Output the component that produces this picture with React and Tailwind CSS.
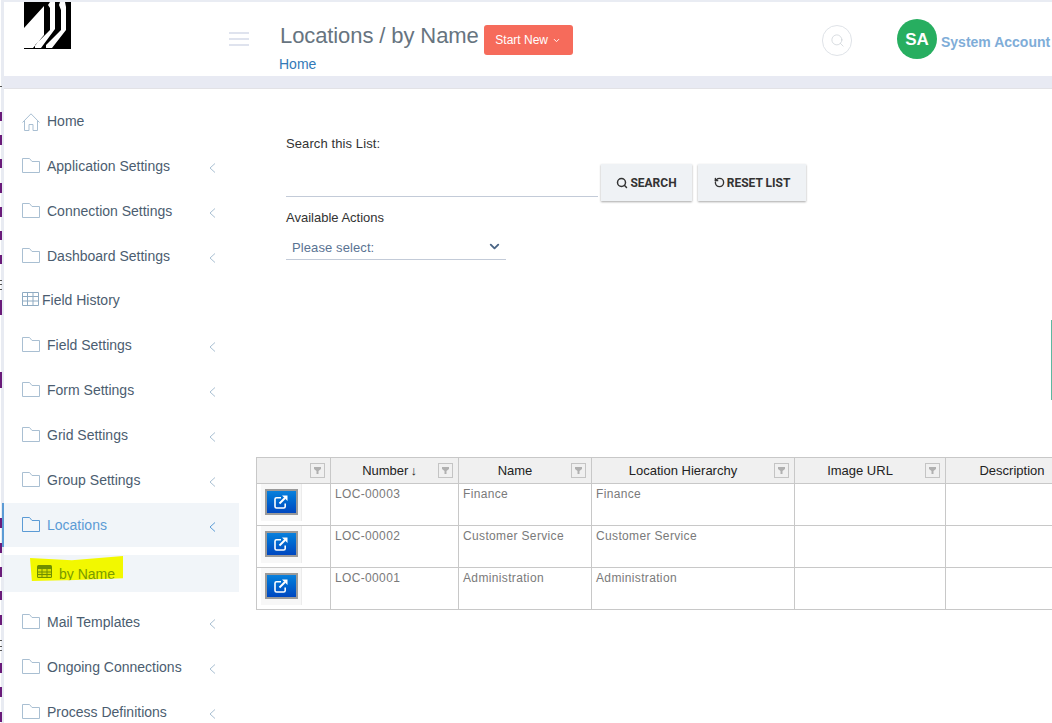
import { ChevronDown, RotateCcw, Search } from 'lucide-react';

const menuTop = [
  { label: 'Home', icon: 'home' },
  { label: 'Application Settings', icon: 'folder', arrow: true },
  { label: 'Connection Settings', icon: 'folder', arrow: true },
  { label: 'Dashboard Settings', icon: 'folder', arrow: true },
  { label: 'Field History', icon: 'grid' },
  { label: 'Field Settings', icon: 'folder', arrow: true },
  { label: 'Form Settings', icon: 'folder', arrow: true },
  { label: 'Grid Settings', icon: 'folder', arrow: true },
  { label: 'Group Settings', icon: 'folder', arrow: true },
];

const menuBottom = ['Mail Templates', 'Ongoing Connections', 'Process Definitions'];

const columns = [
  { label: '', width: 'w-[74px]', filter: true },
  { label: 'Number', width: 'w-[128px]', filter: true, sorted: true },
  { label: 'Name', width: 'w-[133px]', filter: true },
  { label: 'Location Hierarchy', width: 'w-[203px]', filter: true },
  { label: 'Image URL', width: 'w-[151px]', filter: true },
  { label: 'Description', width: 'w-[138px]' },
];

const rows = [
  { number: 'LOC-00003', name: 'Finance' },
  { number: 'LOC-00002', name: 'Customer Service' },
  { number: 'LOC-00001', name: 'Administration' },
];

// purple bits of whatever sits behind the window, [top, height]
const edgeMarks = [
  [112, 9], [135, 10], [159, 9], [183, 10], [207, 10], [231, 9], [255, 9], [300, 15], [372, 16],
  [518, 10], [543, 10], [567, 10], [591, 9], [615, 10], [663, 10], [687, 10], [712, 10],
];
const edgeDashes = [86, 280, 284, 289, 640, 646, 650];

function FolderIcon({ color = '#a9bfd2' }) {
  return (
    <svg width="18" height="15" viewBox="0 0 18 15" fill="none" stroke={color} className="shrink-0 -mt-[2px]">
      <path d="M.5 14.500V.5h7l2.500 3h7.500v11z" />
    </svg>
  );
}

function HomeIcon() {
  return (
    <svg width="18" height="18" viewBox="0 0 18 18" fill="none" stroke="#a9bfd2" className="shrink-0">
      <path d="M.5 9.500 9 .8l8.500 8.700M2.500 8v9.500h4.500v-6h4v6h4.500V8" />
    </svg>
  );
}

function GridIcon() {
  return (
    <svg width="17" height="14" viewBox="0 0 17 14" fill="none" stroke="#8fabc2" className="shrink-0 -mt-[5px]">
      <path d="M.5.500h16v13H.500zM.5 4.500h16M.5 9h16M5.500.5v13M11 .5v13" />
    </svg>
  );
}

function ArrowLeft({ color = '#a9bfd2' }) {
  return (
    <svg width="7" height="10" viewBox="0 0 7 10" fill="none" stroke={color} className="shrink-0 mt-[3px]">
      <path d="M6 .5 1 5l5 4.500" />
    </svg>
  );
}

function MenuItem({ label, icon, arrow }) {
  return (
    <div className={`${icon === 'grid' ? 'h-[44px]' : 'h-[45px]'} flex items-center pl-[18px] pr-[23px] text-[14px] text-[#4b5d70]`}>
      {icon === 'home' && <HomeIcon />}
      {icon === 'folder' && <FolderIcon />}
      {icon === 'grid' && <GridIcon />}
      <span className={icon === 'grid' ? 'ml-[3px] -mt-[2px] flex-1' : 'ml-[7px] flex-1'}>{label}</span>
      {arrow && <ArrowLeft />}
    </div>
  );
}

function FilterButton() {
  return (
    <span className="w-[15px] h-[15px] border border-[#c4c4c4] bg-[#f0f0f0] flex items-center justify-center shrink-0">
      <svg width="7" height="7" viewBox="0 0 7 7" fill="#b0b0b0">
        <path d="M0 0h7v2L4.500 4v3h-2V4L0 2z" />
      </svg>
    </span>
  );
}

function Logo() {
  return (
    <svg width="47" height="47" viewBox="0 0 47 47" className="block">
      <rect width="47" height="47" fill="#000" />
      <path
        d="M20 4 0 26v20h9l11-13zM26 0h5v27L17 46h-6v-3l15-15V6l-2-3zM36 0h5l1 5v23L28 46h-6v-3l15-15V8l-2-5z"
        fill="#fff"
      />
    </svg>
  );
}

function OpenIcon() {
  return (
    <svg width="14" height="14" viewBox="0 0 14 14" fill="none" stroke="#fff" strokeWidth="1.600">
      <path d="M7 2.800H2.500a1.500 1.500 0 0 0-1.500 1.500v7.200a1.500 1.500 0 0 0 1.500 1.500h7.200a1.500 1.500 0 0 0 1.500-1.500V8.500" />
      <path d="M5.500 8.500 11 3" strokeWidth="2" />
      <path d="M8 .5h5.500V6z" fill="#fff" stroke="none" />
    </svg>
  );
}

function TableIcon() {
  return (
    <svg width="15" height="13" viewBox="0 0 15 13" className="shrink-0">
      <rect width="15" height="13" rx="1.500" fill="#6f8f00" />
      <path d="M1 4h3.500v2.500H1zM5.500 4h4v2.500h-4zM10.500 4H14v2.500h-3.500zM1 7.500h3.500V9H1zM5.500 7.500h4V9h-4zM10.500 7.500H14V9h-3.500zM1 10h3.500v2H1zM5.500 10h4v2h-4zM10.500 10H14v2h-3.500z" fill="#d8e000" />
    </svg>
  );
}

export default function App() {
  return (
    <div className="relative w-[1052px] h-[723px] overflow-hidden flex bg-white font-['Liberation_Sans',sans-serif] text-[14px]">
      {/* left edge strip */}
      <svg width="4" height="723" viewBox="0 0 4 723" className="shrink-0 block">
        <rect x="1" width="3" height="723" fill="#e8ebf2" />
        {edgeMarks.map(([top, h]) => (
          <rect key={top} y={top} width="2" height={h} fill="#6a1b7a" />
        ))}
        {edgeDashes.map((top) => (
          <rect key={top} y={top} width="2" height="1" fill="#555" />
        ))}
      </svg>

      <div className="flex-1 flex flex-col min-w-0">
        <div className="h-[2px] bg-[#e9ecf3] shrink-0" />

        {/* header */}
        <header className="h-[74px] shrink-0 flex bg-white">
          <div className="w-[225px] shrink-0 pl-[20px]">
            <Logo />
          </div>
          <div className="w-[20px] shrink-0 pt-[30px] flex flex-col gap-[4px]">
            <div className="h-[2px] bg-[#dfe3ee]" />
            <div className="h-[2px] bg-[#dfe3ee]" />
            <div className="h-[2px] bg-[#dfe3ee]" />
          </div>
          <div className="pl-[31px] pt-[19px] w-[574px] shrink-0">
            <div className="flex items-center h-[30px]">
              <h1 className="text-[22px] leading-[30px] tracking-[-0.1px] text-[#67747f]">Locations / by Name</h1>
              <button className="ml-[5px] mt-[8px] w-[89px] h-[30px] rounded-[3px] bg-[#f66b5b] text-white text-[12px] flex items-center justify-center gap-[4px]">
                Start New <ChevronDown size={9} strokeWidth={2.5} />
              </button>
            </div>
            <div className="text-[#337ab7] text-[14px] leading-[16px] mt-[5px] -ml-[1px]">Home</div>
          </div>
          <div className="w-[30px] h-[31px] rounded-full border border-[#dfe3e8] flex items-center justify-center mt-[23px] -ml-[1px] shrink-0">
            <Search size={15} strokeWidth={1} className="text-[#c2c8cf]" />
          </div>
          <div className="w-[40px] h-[40px] rounded-full bg-[#27ae60] text-white flex items-center justify-center pt-[2px] text-[17px] font-bold ml-[45px] mt-[17px] shrink-0">SA</div>
          <div className="ml-[4px] mt-[32px] text-[14px] leading-[16px] font-bold text-[#7fadd8] whitespace-nowrap">System Account</div>
        </header>

        <div className="h-[13px] bg-[#e8eaf3] shrink-0 border-b border-[#e2e2e6]" />

        <div className="flex-1 flex min-h-0">
          {/* sidebar */}
          <aside className="w-[235px] shrink-0 pt-[10px] bg-white">
            {menuTop.map((item) => (
              <MenuItem key={item.label} {...item} />
            ))}
            <div className="h-[44px] flex items-center pl-[18px] pr-[23px] bg-[#f1f5f9] border-l-2 border-[#5b9bd5] -ml-[2px] text-[#5b9bd5]">
              <FolderIcon color="#5b9bd5" />
              <span className="ml-[7px] flex-1">Locations</span>
              <ArrowLeft color="#5b9bd5" />
            </div>
            <div className="mt-[8px] h-[37px] bg-[#f1f5f9] pl-[26px] pt-[1px]">
              <div className="w-[93px] h-[26px] flex items-center pl-[7px] pt-[5px] bg-[#f2f800] text-[#7a9a00] [clip-path:polygon(0_8%,45%_16%,100%_0,100%_86%,50%_92%,2%_96%)]">
                <TableIcon />
                <span className="ml-[7px] mt-[4px] leading-[16px]">by Name</span>
              </div>
            </div>
            <div className="h-[8px]" />
            {menuBottom.map((label) => (
              <MenuItem key={label} label={label} icon="folder" arrow />
            ))}
          </aside>

          {/* main */}
          <main className="flex-1 min-w-0 overflow-hidden pl-[17px]">
            <div className="pl-[30px] pt-[47px]">
              <div className="text-[13px] leading-[16px] tracking-[0.1px] text-[#333]">Search this List:</div>
              <div className="flex items-end mt-[12px]">
                <div className="w-[312px] h-[33px] border-b border-[#c3cbd8]" />
                <button className="ml-[3px] w-[91px] h-[37px] mb-[-4px] bg-[#eff2f5] shadow-[0_1px_2px_rgba(0,0,0,0.35)] text-[12px] font-bold font-['Roboto',sans-serif] text-[#333] flex items-center justify-center gap-[2px]">
                  <Search size={12} strokeWidth={3} /> SEARCH
                </button>
                <button className="ml-[6px] w-[108px] h-[37px] mb-[-4px] bg-[#eff2f5] shadow-[0_1px_2px_rgba(0,0,0,0.35)] text-[12px] font-bold font-['Roboto',sans-serif] text-[#333] flex items-center justify-center gap-[2px]">
                  <RotateCcw size={11} strokeWidth={3} /> RESET LIST
                </button>
              </div>
              <div className="text-[13px] leading-[16px] text-[#333] mt-[13px]">Available Actions</div>
              <div className="w-[220px] h-[26px] mt-[8px] border-b border-[#c3cbd8] flex items-center pt-[2px] pl-[6px] pr-[4px] text-[13px] tracking-[0.1px] text-[#5a7393]">
                <span className="flex-1">Please select:</span>
                <ChevronDown size={15} strokeWidth={3} className="text-[#4a6585] -mt-[3px]" />
              </div>
            </div>

            {/* grid */}
            <div className="mt-[197px] w-[838px]">
              <div className="flex h-[27px] bg-[#f0f0f0] border-y border-l border-[#c8c8c8] text-[13px]">
                {columns.map((col) => (
                  <div key={col.label || 'actions'} className={`${col.width} shrink-0 border-r border-[#c8c8c8] flex items-center pr-[5px] text-[#222]`}>
                    <span className={col.sorted ? 'flex-1 text-center pl-[10px]' : 'flex-1 text-center'}>
                      {col.label}
                      {col.sorted && <span className="ml-[2px] font-bold">↓</span>}
                    </span>
                    {col.filter && <FilterButton />}
                  </div>
                ))}
              </div>
              {rows.map((row) => (
                <div key={row.number} className="flex h-[42px] border-b border-l border-[#c8c8c8] text-[12px] leading-[16px] tracking-[0.35px] text-[#7a7a7a]">
                  <div className="w-[74px] shrink-0 border-r border-[#c8c8c8] pl-[4px]">
                    <div className="w-[41px] h-[37px] bg-[#f7f7f7] border-r border-[#ececec] flex items-center justify-center">
                      <span className="w-[33px] h-[26px] -mt-[1px] border-2 border-[#9a9a9a] bg-gradient-to-b from-[#0a80dc] to-[#0047c0] flex items-center justify-center">
                        <OpenIcon />
                      </span>
                    </div>
                  </div>
                  <div className="w-[128px] shrink-0 border-r border-[#c8c8c8] pl-[4px] pt-[2px]">{row.number}</div>
                  <div className="w-[133px] shrink-0 border-r border-[#c8c8c8] pl-[4px] pt-[2px]">{row.name}</div>
                  <div className="w-[203px] shrink-0 border-r border-[#c8c8c8] pl-[4px] pt-[2px]">{row.name}</div>
                  <div className="w-[151px] shrink-0 border-r border-[#c8c8c8]" />
                  <div className="w-[138px] shrink-0" />
                </div>
              ))}
            </div>
          </main>
        </div>
      </div>

      {/* sliver of the scrollbar at the window edge */}
      <div className="absolute right-0 top-[320px] w-[1px] h-[80px] bg-[#5fb8a0]" />
    </div>
  );
}
